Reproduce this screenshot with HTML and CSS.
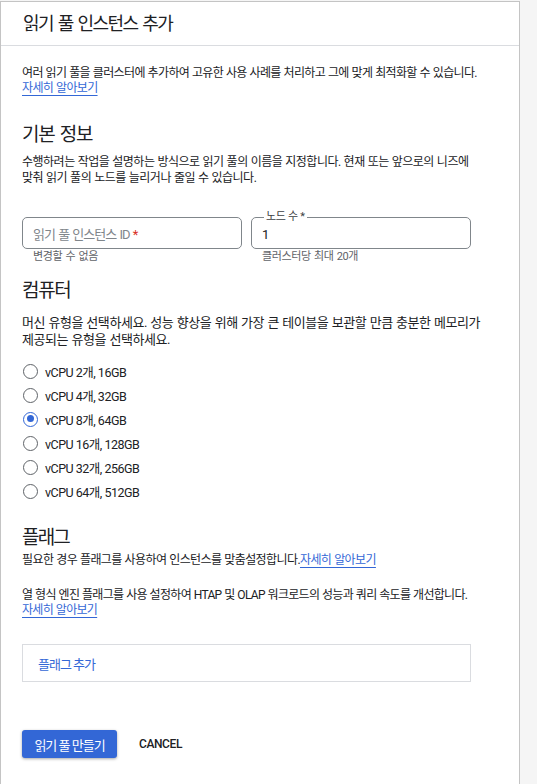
FILE: index.html
```html
<!DOCTYPE html>
<html lang="ko">
<head>
<meta charset="utf-8">
<title>읽기 풀 인스턴스 추가</title>
<link rel="stylesheet" href="styles.css">
</head>
<body>
<div class="panel">
  <header class="panel-header">
    <h1 class="title">읽기 풀 인스턴스 추가</h1>
  </header>
  <main class="content">
    <p class="intro">여러 읽기 풀을 클러스터에 추가하여 고유한 사용 사례를 처리하고 그에 맞게 최적화할 수 있습니다. <a class="link" href="#">자세히 알아보기</a></p>

    <h2 class="section-title first">기본 정보</h2>
    <p class="desc">수행하려는 작업을 설명하는 방식으로 읽기 풀의 이름을 지정합니다. 현재 또는 앞으로의 니즈에 맞춰 읽기 풀의 노드를 늘리거나 줄일 수 있습니다.</p>

    <div class="fields">
      <div class="field">
        <div class="input-box">
          <span class="placeholder">읽기 풀 인스턴스 ID <span class="req">*</span></span>
        </div>
        <div class="hint">변경할 수 없음</div>
      </div>
      <div class="field">
        <div class="input-box filled">
          <span class="float-label">노드 수 *</span>
          <span class="value">1</span>
        </div>
        <div class="hint">클러스터당 최대 20개</div>
      </div>
    </div>

    <h2 class="section-title compute">컴퓨터</h2>
    <p class="desc-lg">머신 유형을 선택하세요. 성능 향상을 위해 가장 큰 테이블을 보관할 만큼 충분한 메모리가 제공되는 유형을 선택하세요.</p>

    <div class="radios">
      <label class="radio"><span class="dot"></span><span class="rlabel">vCPU 2개, 16GB</span></label>
      <label class="radio"><span class="dot"></span><span class="rlabel">vCPU 4개, 32GB</span></label>
      <label class="radio checked"><span class="dot"></span><span class="rlabel">vCPU 8개, 64GB</span></label>
      <label class="radio"><span class="dot"></span><span class="rlabel">vCPU 16개, 128GB</span></label>
      <label class="radio"><span class="dot"></span><span class="rlabel">vCPU 32개, 256GB</span></label>
      <label class="radio"><span class="dot"></span><span class="rlabel">vCPU 64개, 512GB</span></label>
    </div>

    <h2 class="section-title flags">플래그</h2>
    <p class="desc flags-desc">필요한 경우 플래그를 사용하여 인스턴스를 맞춤설정합니다.<a class="link" href="#">자세히 알아보기</a></p>
    <p class="intro engine">열 형식 엔진 플래그를 사용 설정하여 HTAP 및 OLAP 워크로드의 성능과 쿼리 속도를 개선합니다. <a class="link" href="#">자세히 알아보기</a></p>

    <div class="flag-box"><span class="flag-add">플래그 추가</span></div>

    <div class="actions">
      <button class="btn-primary" type="button">읽기 풀 만들기</button>
      <button class="btn-text" type="button">CANCEL</button>
    </div>
  </main>
</div>
</body>
</html>
```

FILE: styles.css
```css
* { box-sizing: border-box; }

html, body {
  margin: 0;
  padding: 0;
}

body {
  background: #f5f5f5;
  font-family: Roboto, "Noto Sans CJK KR", sans-serif;
  color: #202124;
  padding-top: 1px;
  min-height: 784px;
  word-break: keep-all;
}

.panel {
  width: 520px;
  min-height: 820px;
  background: #fff;
  border: 1px solid #c4c4c4;
  border-bottom: none;
}

.panel-header {
  height: 44px;
  border-bottom: 1px solid #dadce0;
  padding: 0 22px;
  display: flex;
  align-items: center;
}

.title {
  margin: 0;
  font-size: 18px;
  font-weight: 400;
  letter-spacing: -1.6px;
  word-spacing: 2px;
  color: #202124;
  line-height: 24px;
}

.content {
  padding: 20px 35px 0 21px;
}

.intro, .desc {
  margin: 0;
  font-size: 12px;
  line-height: 15px;
  letter-spacing: -0.65px;
  word-spacing: 0.5px;
  color: #202124;
}

.desc { line-height: 16px; letter-spacing: -0.5px; }

.link {
  color: #3367d6;
  text-decoration: underline;
  text-underline-offset: 3px;
  text-decoration-thickness: 1px;
}

.section-title {
  margin: 0;
  font-size: 19px;
  font-weight: 400;
  line-height: 24px;
  letter-spacing: -1.3px;
  word-spacing: 2px;
  color: #202124;
}

.section-title.first { margin-top: 27px; margin-bottom: 7px; }
.section-title.compute { margin-top: 15px; margin-bottom: 11px; }
.section-title.flags { margin-top: 23px; margin-bottom: 2px; letter-spacing: -1.8px; }

.fields {
  display: flex;
  gap: 9px;
  width: 449px;
  margin-top: 31px;
}

.field { flex: 1; }

.input-box {
  position: relative;
  height: 32px;
  border: 1px solid #80868b;
  border-radius: 5px;
  display: flex;
  align-items: center;
  padding: 0 10px;
}

.placeholder {
  font-size: 13px;
  color: #80868b;
  letter-spacing: -1px;
  word-spacing: 1px;
}

.req { color: #d93025; }

.float-label {
  position: absolute;
  top: -8px;
  left: 12px;
  padding: 0 2px;
  background: #fff;
  font-size: 11px;
  line-height: 14px;
  color: #3c4043;
  letter-spacing: -0.3px;
}

.value {
  font-size: 13px;
  color: #202124;
  margin-top: 2px;
}

.hint {
  font-size: 11px;
  line-height: 14px;
  color: #5f6368;
  padding-left: 11px;
  margin-top: 1px;
  letter-spacing: -0.4px;
  word-spacing: 1px;
}

.desc-lg {
  margin: 0;
  font-size: 13px;
  line-height: 17px;
  letter-spacing: -0.42px;
  word-spacing: 0.5px;
  color: #202124;
}

.radios {
  margin-top: 11px;
  display: flex;
  flex-direction: column;
}

.radio {
  height: 24px;
  display: flex;
  align-items: center;
  gap: 7px;
}

.dot {
  width: 15px;
  height: 15px;
  border-radius: 50%;
  border: 1.5px solid #5f6368;
  margin-left: 1px;
  position: relative;
  flex: none;
}

.radio.checked .dot { border-color: #3367d6; }

.radio.checked .dot::after {
  content: "";
  position: absolute;
  left: 2.5px;
  top: 2.5px;
  width: 7px;
  height: 7px;
  border-radius: 50%;
  background: #3367d6;
}

.rlabel {
  font-size: 12.5px;
  color: #202124;
  letter-spacing: -0.5px;
}

.flags-desc { line-height: 16px; letter-spacing: -0.6px; }

.engine { margin-top: 20px; letter-spacing: -0.7px; }

.flag-box {
  margin-top: 26px;
  width: 449px;
  height: 38px;
  border: 1px solid #dadce0;
  display: flex;
  align-items: center;
  padding-left: 15px;
}

.flag-add {
  font-size: 13px;
  color: #3367d6;
  letter-spacing: -1px;
}

.actions {
  margin-top: 48px;
  display: flex;
  align-items: center;
  gap: 22px;
}

.btn-primary {
  height: 28px;
  width: 95px;
  border: none;
  border-radius: 3px;
  background: #3367d6;
  color: #fff;
  font-family: Roboto, "Noto Sans CJK KR", sans-serif;
  font-size: 13px;
  letter-spacing: -1px;
  box-shadow: 0 1px 3px rgba(0,0,0,0.35);
  padding: 0;
}

.btn-text {
  border: none;
  background: none;
  padding: 0;
  font-family: Roboto, "Noto Sans CJK KR", sans-serif;
  font-size: 12px;
  font-weight: 500;
  color: #202124;
  letter-spacing: -0.4px;
}
```
